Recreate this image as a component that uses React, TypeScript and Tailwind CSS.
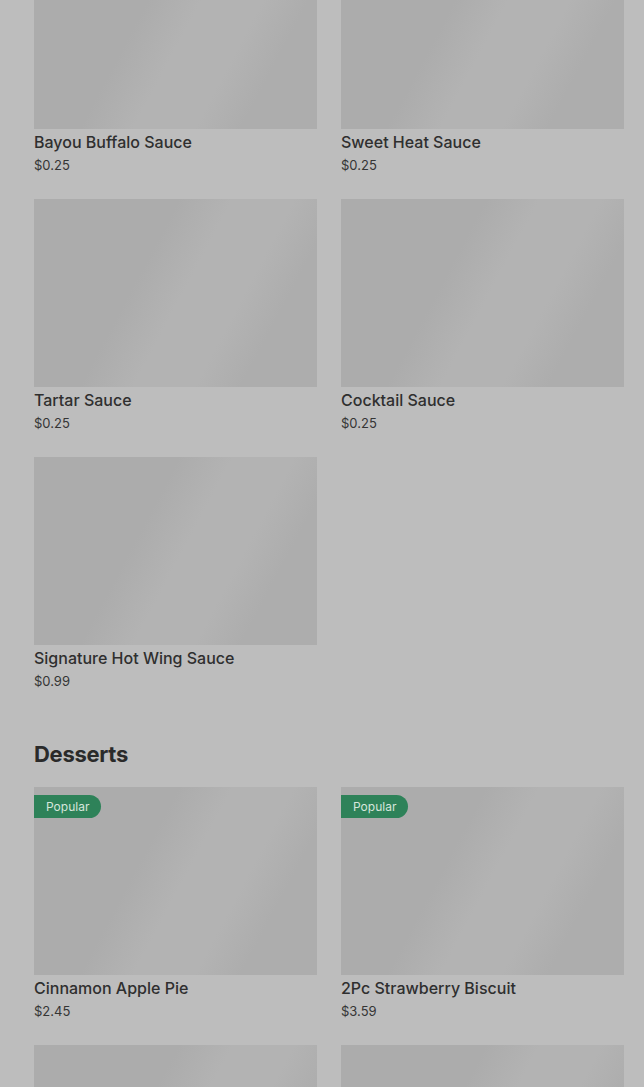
import React from "react";

type Item = { name: string; price: string; popular?: boolean };

const sauces: Item[] = [
  { name: "Bayou Buffalo Sauce", price: "$0.25" },
  { name: "Sweet Heat Sauce", price: "$0.25" },
  { name: "Tartar Sauce", price: "$0.25" },
  { name: "Cocktail Sauce", price: "$0.25" },
  { name: "Signature Hot Wing Sauce", price: "$0.99" },
];

const desserts: Item[] = [
  { name: "Cinnamon Apple Pie", price: "$2.45", popular: true },
  { name: "2Pc Strawberry Biscuit", price: "$3.59", popular: true },
  { name: "", price: "" },
  { name: "", price: "" },
];

function Card({ item }: { item: Item }) {
  return (
    <div className="flex flex-col">
      <div className="relative h-[188px] w-full bg-[linear-gradient(118deg,#acacac_0%,#acacac_38%,#b3b3b3_52%,#b3b3b3_68%,#adadad_80%,#adadad_100%)]">
        {item.popular && (
          <div className="absolute left-0 top-[8px] flex h-[23px] items-center rounded-r-full bg-[#2e8259] pl-[12px] pr-[12px] text-[12px] leading-none text-[#d6e6dc]">
            Popular
          </div>
        )}
      </div>
      {item.name && (
        <>
          <div className="mt-[1px] text-[16px] font-medium leading-6 text-[#2f2f2f]">{item.name}</div>
          <div className="mt-[1px] text-[13px] leading-5 text-[#353535]">{item.price}</div>
        </>
      )}
    </div>
  );
}

export default function App() {
  return (
    <div
      className="h-[1087px] w-full overflow-hidden bg-[#bdbdbd] pl-[34px] pr-[20px]"
      style={{ fontFamily: "Inter, 'Liberation Sans', sans-serif" }}
    >
      <div className="-mt-[59px] grid grid-cols-2 gap-x-[24px] gap-y-[24px]">
        {sauces.map((s, i) => (
          <Card key={i} item={s} />
        ))}
      </div>
      <h2 className="mt-[47px] text-[22px] font-bold leading-8 tracking-[-0.3px] text-[#2a2a2a]">Desserts</h2>
      <div className="mt-[17px] grid grid-cols-2 gap-x-[24px] gap-y-[24px]">
        {desserts.map((s, i) => (
          <Card key={i} item={s} />
        ))}
      </div>
    </div>
  );
}
